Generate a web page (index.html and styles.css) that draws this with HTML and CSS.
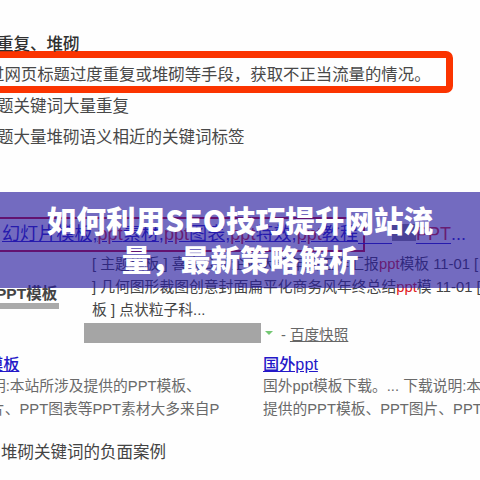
FILE: index.html
```html
<!DOCTYPE html>
<html lang="zh-CN">
<head>
<meta charset="utf-8">
<title>如何利用SEO技巧提升网站流量，最新策略解析</title>
<link rel="stylesheet" href="styles.css">
</head>
<body>
<main class="page">
  <section class="rules">
    <h2 class="rule-title">重复、堆砌</h2>
    <p class="rule-box"><span>过网页标题过度重复或堆砌等手段，获取不正当流量的情况。</span></p>
    <p class="rule">题关键词大量重复</p>
    <p class="rule">题大量堆砌语义相近的关键词标签</p>
  </section>
  <section class="result">
    <div class="result-title"><a class="link">幻灯片模板,<em>ppt</em>素材,<em>ppt</em>图表,<em>ppt</em>特效,<em>ppt</em>教程</a><span class="tail"><i class="dash"></i><i class="smudge"></i><em>PPT</em>...</span></div>
    <div class="result-body">
      <div class="thumb"><span>PPT模板</span></div>
      <div class="summary">
        <p class="line"><span>[ 主题模板 ] 喜庆公司企业大气年终工作</span><span>汇报<em>ppt</em>模板 11-01 [</span></p>
        <p class="line"><span>] 几何图形裁图创意封面扁平化商务</span><span>风年终总结<em>ppt</em>模 11-01 [</span></p>
        <p class="line last">板 ] 点状粒子科...</p>
        <div class="source"><i class="mask"></i><i class="caret"></i><span>- <u>百度快照</u></span></div>
      </div>
    </div>
  </section>
  <section class="sublinks">
    <div class="sub sub-left">
      <a class="link">模板</a>
      <p class="s1">明:本站所涉及提供的PPT模板、</p>
      <p class="s2">片、PPT图表等PPT素材大多来自P</p>
    </div>
    <div class="sub sub-right">
      <a class="link">国外ppt</a>
      <p>国外ppt模板下载。... 下载说明:本站</p>
      <p>提供的PPT模板、PPT图片、PPT图</p>
    </div>
  </section>
  <p class="caption">堆砌关键词的负面案例</p>
  <h1 class="banner">如何利用SEO技巧提升网站流<br>量，最新策略解析</h1>
</main>
</body>
</html>
```
FILE: styles.css
```css
* { box-sizing: border-box; margin: 0; padding: 0; }
body { width: 480px; height: 480px; overflow: hidden; background: #fefefe; font-family: "Liberation Sans", "Noto Sans CJK SC", sans-serif; color: #333; }
em, i { font-style: normal; }
.page { position: relative; width: 480px; height: 480px; overflow: hidden; }
.rules { height: 217px; padding-top: 33px; font-family: "Noto Sans CJK SC", sans-serif; font-size: 16.5px; color: #484848; }
.rule-title { height: 18px; line-height: 20px; font-size: 16.5px; font-weight: 500; margin-left: -3px; color: #303030; }
.rule-box { width: 463px; height: 42px; margin-left: -10px; border: 7px solid #fb3400; border-radius: 7px; display: flex; align-items: center; white-space: nowrap; }
.rule-box span { margin-left: -9px; padding-top: 2px; font-size: 16.4px; }
.rule { height: 31px; line-height: 31px; margin-left: -3px; white-space: nowrap; }
.rule-box + .rule { margin-top: -3px; }
.result { height: 136px; }
.result-title { height: 35px; width: 367px; margin-left: -2px; border: 2px solid #d0021b; padding-left: 2px; font-size: 18.1px; line-height: 30px; white-space: nowrap; display: flex; }
.link { color: #2418c8; text-decoration: underline; }
.result-title .link { flex: none; }
.link em, .line em, .tail em { color: #e02020; }
.tail { flex: none; color: #2418c8; display: flex; }
.dash { width: 34px; height: 25px; border-bottom: 1px solid #2418c8; }
.smudge { width: 24px; height: 17px; background: #8a8a8a; margin-top: 5px; }
.tail em { font-size: 18px; height: 25px; border-bottom: 1px solid #2418c8; }
.result-body { display: flex; }
.thumb { flex: none; width: 84px; padding-top: 31px; }
.thumb span { display: block; width: 63px; height: 26px; line-height: 21px; margin-left: -4px; border-bottom: 6px solid #aaa; font-size: 15.5px; font-weight: 700; color: #444; white-space: nowrap; }
.summary { flex: none; width: 396px; }
.line { height: 23px; line-height: 25px; font-size: 14.8px; white-space: nowrap; display: flex; margin-left: 8px; color: #444; }
.line span { flex: none; }
.last { line-height: 24px; }
.source { display: flex; align-items: center; height: 20px; margin-top: 2px; font-size: 14.6px; color: #666; }
.mask { width: 177px; height: 20px; background: #a5a5a5; }
.caret { border: 4px solid transparent; border-top-color: #74c774; border-bottom: 0; margin: 0 8px 0 4px; }
.sublinks { display: flex; height: 83px; color: #6a6a6a; font-size: 14.75px; line-height: 23px; white-space: nowrap; }
.sub { flex: none; height: 70px; }
.sub .link { display: block; font-size: 16.2px; line-height: 22px; font-weight: 500; }
.sub-left { width: 263px; }
.sub-left .link { margin-left: -13px; }
.s1 { margin-left: -9px; }
.s2 { margin-left: -10px; }
.caption { font: 16.5px/30px "Noto Sans CJK SC", sans-serif; color: #444; padding-left: 1px; }
.banner { position: absolute; left: 0; top: 192px; width: 480px; height: 96px; padding-top: 9px; background: rgba(40, 28, 158, .65); color: #fff; font: 900 29.6px/38.5px "Noto Sans CJK SC", sans-serif; text-align: center; }
```
